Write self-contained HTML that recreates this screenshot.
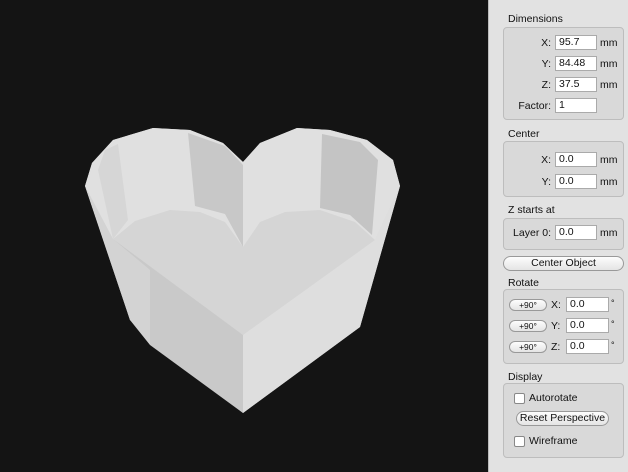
<!DOCTYPE html>
<html><head><meta charset="utf-8"><style>
body{margin:0;width:628px;height:472px;background:#141414;position:relative;overflow:hidden;font-family:"Liberation Sans",sans-serif;font-size:11px;color:#111}
#p{position:absolute;left:488px;top:0;width:140px;height:472px;background:#e2e2e2;border-left:1px solid #bbb}
.a{position:absolute}
.box{position:absolute;left:14px;width:119px;border:1px solid #bdbdbd;border-radius:4px;background:#d9d9d9}
.lab{position:absolute;left:19px;font-size:10.5px}
.in{position:absolute;width:37px;height:13px;background:#fff;border:1px solid #aaa;font-size:10.5px;line-height:13px;padding-left:3px;box-sizing:content-box}
.r{position:absolute;text-align:right;font-size:10.5px}
.btn{position:absolute;background:linear-gradient(#fdfdfd,#e4e4e4);border:1px solid #999;border-radius:8px;text-align:center;font-size:10.5px}
.cb{position:absolute;width:9px;height:9px;border:1px solid #888;background:#fff;border-radius:2px}
.mm{position:absolute;left:111px;font-size:10.5px}
</style></head><body>
<svg class="a" style="left:0;top:0" width="488" height="472">
<polygon points="85,186 92,163 113,140 153,128 190,130 223,143 243,162 260,143 297,128 330,130 367,140 393,160 400,186 360,327 243,413 130,320" fill="#d9d9d9"/>
<polygon points="85,186 92,163 113,140 153,128 190,130 223,143 243,162 260,143 297,128 330,130 367,140 393,160 400,186 375,240 243,247 113,239" fill="#e0e0e0"/>
<polygon points="188,133 225,146 243,165 243,247 225,214 195,206" fill="#c8c8c8"/>
<polygon points="322,134 360,142 378,160 372,235 350,215 320,208" fill="#c4c4c4"/>
<polygon points="105,150 118,144 128,220 113,239 98,170" fill="#d6d6d6"/>
<polygon points="113,239 135,221 170,210 200,212 225,222 243,247 260,222 285,212 320,210 355,222 375,240 243,335" fill="#d5d5d5"/>
<polygon points="85,186 113,239 150,270 150,345 130,320" fill="#d3d3d3"/>
<polygon points="113,239 243,335 243,413 150,345 150,270" fill="#c9c9c9"/>
<polygon points="243,335 375,240 400,186 360,327 243,413" fill="#dedede"/>
</svg>
<div id="p">
<div class="lab" style="top:13px">Dimensions</div>
<div class="box" style="top:27px;height:91px"></div>
<div class="r" style="left:30px;width:32px;top:37px">X:</div><div class="in" style="left:66px;top:35px">95.7</div><div class="mm" style="top:37px">mm</div>
<div class="r" style="left:30px;width:32px;top:58px">Y:</div><div class="in" style="left:66px;top:56px">84.48</div><div class="mm" style="top:58px">mm</div>
<div class="r" style="left:30px;width:32px;top:79px">Z:</div><div class="in" style="left:66px;top:77px">37.5</div><div class="mm" style="top:79px">mm</div>
<div class="r" style="left:10px;width:52px;top:100px">Factor:</div><div class="in" style="left:66px;top:98px">1</div>
<div class="lab" style="top:128px">Center</div>
<div class="box" style="top:141px;height:54px"></div>
<div class="r" style="left:30px;width:32px;top:154px">X:</div><div class="in" style="left:66px;top:152px">0.0</div><div class="mm" style="top:154px">mm</div>
<div class="r" style="left:30px;width:32px;top:176px">Y:</div><div class="in" style="left:66px;top:174px">0.0</div><div class="mm" style="top:176px">mm</div>
<div class="lab" style="top:204px">Z starts at</div>
<div class="box" style="top:218px;height:30px"></div>
<div class="r" style="left:10px;width:52px;top:227px">Layer 0:</div><div class="in" style="left:66px;top:225px">0.0</div><div class="mm" style="top:227px">mm</div>
<div class="btn" style="left:14px;top:256px;width:119px;height:13px;line-height:13px">Center Object</div>
<div class="lab" style="top:277px">Rotate</div>
<div class="box" style="top:289px;height:73px"></div>
<div class="btn" style="left:20px;top:299px;width:36px;height:10px;line-height:10px;font-size:8.5px">+90°</div><div class="a" style="left:62px;top:299px;font-size:10.5px">X:</div><div class="in" style="left:77px;top:297px;width:38px">0.0</div><div class="a" style="left:122px;top:298px;font-size:9px">°</div>
<div class="btn" style="left:20px;top:320px;width:36px;height:10px;line-height:10px;font-size:8.5px">+90°</div><div class="a" style="left:62px;top:320px;font-size:10.5px">Y:</div><div class="in" style="left:77px;top:318px;width:38px">0.0</div><div class="a" style="left:122px;top:319px;font-size:9px">°</div>
<div class="btn" style="left:20px;top:341px;width:36px;height:10px;line-height:10px;font-size:8.5px">+90°</div><div class="a" style="left:62px;top:341px;font-size:10.5px">Z:</div><div class="in" style="left:77px;top:339px;width:38px">0.0</div><div class="a" style="left:122px;top:340px;font-size:9px">°</div>
<div class="lab" style="top:371px">Display</div>
<div class="box" style="top:383px;height:73px"></div>
<div class="cb" style="left:25px;top:393px"></div><div class="a" style="left:40px;top:392px;font-size:10.5px">Autorotate</div>
<div class="btn" style="left:27px;top:411px;width:91px;height:13px;line-height:13px">Reset Perspective</div>
<div class="cb" style="left:25px;top:436px"></div><div class="a" style="left:40px;top:435px;font-size:10.5px">Wireframe</div>
</div>
</body></html>
